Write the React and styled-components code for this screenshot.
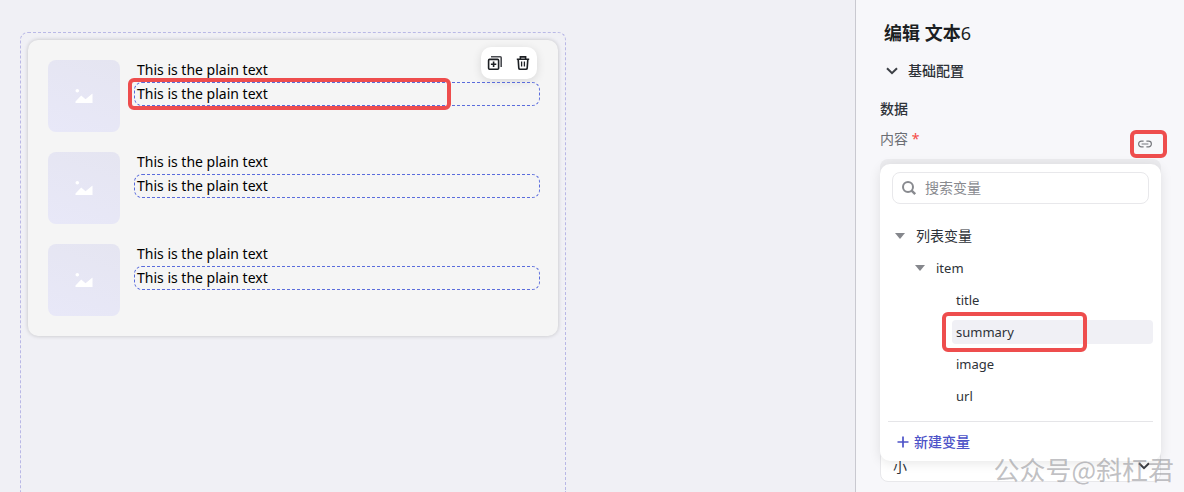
import React, { useState } from "react";
import styled, { createGlobalStyle, css } from "styled-components";

const ITEMS = [1, 2, 3];
const FIELDS = ["title", "summary", "image", "url"];

function Thumbnail() {
  return (
    <Thumb>
      <svg width="18" height="14" viewBox="0 0 18 14" fill="#fff">
        <circle cx="2.3" cy="1.8" r="1.8" />
        <path d="M0.5 14v-1.5L6.2 6.5l4.3 3.8L17.5 4.6V14z" />
      </svg>
    </Thumb>
  );
}

function CardToolbar() {
  return (
    <Toolbar>
      <IconButton type="button" aria-label="复制">
        <svg width="16" height="16" viewBox="0 0 16 16" fill="none" stroke="#1c1f23" strokeWidth="1.6">
          <rect x="1.6" y="4.4" width="10" height="9.8" rx="1" />
          <path d="M4 1.8h9.2q1 0 1 1v9.2" stroke="#4b4d52" />
          <path d="M6.6 6.6v5.4M3.9 9.3h5.4" />
        </svg>
      </IconButton>
      <IconButton type="button" aria-label="删除">
        <svg width="16" height="16" viewBox="0 0 16 16" fill="none" stroke="#1c1f23" strokeWidth="1.6">
          <path d="M1.8 4.2h12.4M5.4 3.9V1.9h5.2v2M3.2 4.4l.6 8.7q.1 1.2 1.3 1.2h5.8q1.2 0 1.3-1.2l.6-8.7" />
          <path d="M6.6 6.6v5M9.4 6.6v5" strokeWidth="1.3" />
        </svg>
      </IconButton>
    </Toolbar>
  );
}

function VariablePicker() {
  const [selected, setSelected] = useState("summary");
  const [keyword, setKeyword] = useState("");

  return (
    <Popover>
      <SearchBox>
        <svg width="16" height="16" viewBox="0 0 16 16" fill="none" stroke="#888a8f" strokeWidth="2">
          <circle cx="7" cy="7" r="5" />
          <path d="M10.6 10.6l3.6 3.6" strokeWidth="2.4" />
        </svg>
        <SearchInput
          aria-label="搜索变量"
          placeholder="搜索变量"
          value={keyword}
          onChange={(e) => setKeyword(e.target.value)}
        />
      </SearchBox>
      <Tree>
        <TreeRow $level={0}>
          <Caret />
          列表变量
        </TreeRow>
        <TreeRow $level={1}>
          <Caret />
          <VariableName>item</VariableName>
        </TreeRow>
        {FIELDS.map((name) => (
          <LeafRow key={name}>
            <Leaf type="button" $active={name === selected} onClick={() => setSelected(name)}>
              <VariableName>{name}</VariableName>
            </Leaf>
            {name === "summary" && <LeafMark />}
          </LeafRow>
        ))}
      </Tree>
      <PopoverFooter>
        <AddButton type="button">
          <svg width="12" height="12" viewBox="0 0 12 12" stroke="#4d53c8" strokeWidth="1.7">
            <path d="M6 0.5v11M0.5 6h11" />
          </svg>
          新建变量
        </AddButton>
      </PopoverFooter>
    </Popover>
  );
}

function App() {
  return (
    <>
      <GlobalStyle />
      <Page>
        <Canvas>
          <Frame>
            <Card>
              <CardToolbar />
              {ITEMS.map((id, index) => (
                <Item key={id}>
                  <Thumbnail />
                  <Texts>
                    <PlainText>This is the plain text</PlainText>
                    <PlainText $outlined>
                      This is the plain text
                      {index === 0 && <TextMark />}
                    </PlainText>
                  </Texts>
                </Item>
              ))}
            </Card>
          </Frame>
        </Canvas>
        <Sidebar>
          <Title>
            编辑 文本<span>6</span>
          </Title>
          <SectionToggle type="button">
            <Chevron />
            基础配置
          </SectionToggle>
          <GroupTitle>数据</GroupTitle>
          <LabelRow>
            <label htmlFor="content">
              内容 <Required>*</Required>
            </label>
            <LinkButton type="button" aria-label="绑定变量">
              <svg width="14" height="8" viewBox="0 0 14 8" fill="none" stroke="#77797e" strokeWidth="1.2">
                <path d="M5.6 1.2H3.4a2.8 2.8 0 0 0 0 5.6h2.2M8.4 1.2h2.2a2.8 2.8 0 0 1 0 5.6H8.4M3.6 4h6.8" />
              </svg>
            </LinkButton>
          </LabelRow>
          <ContentSlot>
            <ContentInput id="content" />
            <VariablePicker />
          </ContentSlot>
          <SelectWrap>
            <SizeSelect aria-label="尺寸" defaultValue="s">
              <option value="s">小</option>
              <option value="m">中</option>
              <option value="l">大</option>
            </SizeSelect>
            <Chevron />
          </SelectWrap>
        </Sidebar>
        <Watermark>公众号@斜杠君</Watermark>
      </Page>
    </>
  );
}

function Chevron() {
  return (
    <svg width="12" height="8" viewBox="0 0 12 8" fill="none" stroke="#3c3f45" strokeWidth="2">
      <path d="M1 1.2l5 5 5-5" />
    </svg>
  );
}

const GlobalStyle = createGlobalStyle`
  * {
    box-sizing: border-box;
  }
  body {
    margin: 0;
    color: #2e3238;
    font-family: "Noto Sans", "Noto Sans CJK SC", sans-serif;
    font-size: 14px;
    line-height: 20px;
  }
  button, input, select, textarea {
    font: inherit;
    color: inherit;
  }
  button {
    border: 0;
    padding: 0;
    background: none;
    cursor: pointer;
  }
`;

const Page = styled.div`
  position: relative;
  display: flex;
  height: 100vh;
  overflow: hidden;
`;

const Canvas = styled.main`
  flex: 1;
  min-width: 0;
  display: flex;
  padding: 32px 20px 0;
  background: #f0f0f5;
`;

const Frame = styled.div`
  flex: 1;
  max-width: 546px;
  padding: 7px;
  border: 1px dashed #b9b8e6;
  border-bottom: 0;
  border-radius: 8px 8px 0 0;
`;

const Card = styled.section`
  position: relative;
  display: grid;
  gap: 18px;
  padding: 18px 18px 20px 20px;
  border-radius: 10px;
  background: #f5f5f5;
  box-shadow: 0 0 4px rgba(0, 0, 0, 0.2);
`;

const Item = styled.article`
  display: flex;
  gap: 14px;
`;

const Thumb = styled.div`
  display: flex;
  align-items: center;
  justify-content: center;
  width: 72px;
  height: 72px;
  margin-top: 2px;
  border-radius: 8px;
  background: linear-gradient(200deg, #e5e5f1, #e8e8f8);
`;

const Texts = styled.div`
  flex: 1;
`;

const PlainText = styled.p`
  position: relative;
  height: 24px;
  margin: 0;
  padding: 0 2px;
  border: 1px dashed transparent;
  border-radius: 8px;
  color: #000;
  font-size: 14px;
  line-height: 22px;
  ${(props) =>
    props.$outlined &&
    css`
      border-color: #5a6cdc;
    `}
`;

const mark = css`
  position: absolute;
  border: 4px solid #ee4d4d;
  border-radius: 6px;
  pointer-events: none;
`;

const TextMark = styled.span`
  ${mark}
  inset: -5px 88px -5px -7px;
`;

const Toolbar = styled.div`
  position: absolute;
  top: 7px;
  right: 21px;
  display: flex;
  gap: 12px;
  padding: 8px 6px;
  border-radius: 10px;
  background: #fff;
  box-shadow: 0 2px 10px rgba(0, 0, 0, 0.12);
`;

const IconButton = styled.button`
  display: flex;
`;

const Sidebar = styled.aside`
  width: 329px;
  padding: 20px 23px 0 24px;
  border-left: 1px solid #c9c9d0;
  background: #f7f7fa;
`;

const Title = styled.h1`
  margin: 0 4px;
  color: #1c1f23;
  font-size: 18px;
  line-height: 26px;

  span {
    font-weight: 400;
  }
`;

const SectionToggle = styled.button`
  display: flex;
  align-items: center;
  gap: 10px;
  margin-top: 15px;
  padding-left: 6px;
  font-weight: 500;
`;

const GroupTitle = styled.h2`
  margin: 18px 0 0;
  font-size: 14px;
  font-weight: 500;
`;

const LabelRow = styled.div`
  display: flex;
  justify-content: space-between;
  height: 40px;
  padding-top: 10px;
  color: #6b6e74;
`;

const Required = styled.span`
  color: #f54a45;
`;

const LinkButton = styled.button`
  ${mark}
  position: static;
  display: flex;
  align-items: center;
  width: 37px;
  height: 28px;
  margin: 1px -6px 0 0;
  padding-left: 4px;
  pointer-events: auto;
`;

const ContentSlot = styled.div`
  position: relative;
  height: 290px;
`;

const ContentInput = styled.textarea`
  display: block;
  width: 100%;
  height: 96px;
  border: 0;
  border-radius: 8px;
  background: #ececef;
  resize: none;
`;

const Popover = styled.div`
  position: absolute;
  top: 5px;
  left: 0;
  right: 0;
  z-index: 1;
  padding: 8px 8px 9px;
  border-radius: 10px;
  background: #fff;
  box-shadow: 0 2px 12px rgba(0, 0, 0, 0.1);
`;

const SearchBox = styled.div`
  display: flex;
  align-items: center;
  gap: 8px;
  height: 32px;
  margin: 0 4px 16px;
  padding: 0 8px;
  border: 1px solid #e8e8eb;
  border-radius: 8px;
`;

const SearchInput = styled.input`
  flex: 1;
  min-width: 0;
  padding: 0;
  border: 0;
  outline: none;
  background: none;

  &::placeholder {
    color: #888a8f;
  }
`;

const Tree = styled.div`
  padding-bottom: 9px;
  border-bottom: 1px solid #e5e5e8;
`;

const TreeRow = styled.div`
  display: flex;
  align-items: center;
  gap: 11px;
  height: 32px;
  padding-left: ${(props) => 7 + props.$level * 20}px;
`;

const VariableName = styled.span`
  font-size: 13px;
`;

const Caret = styled.span`
  border: 5px solid transparent;
  border-top: 6px solid #85878c;
  border-bottom: 0;
`;

const LeafRow = styled.div`
  position: relative;
  padding: 4px 0 4px 64px;
`;

const Leaf = styled.button`
  display: block;
  width: 100%;
  height: 24px;
  padding: 0 4px;
  border-radius: 4px;
  text-align: left;
  background: ${(props) => (props.$active ? "#f0f0f5" : "transparent")};
`;

const LeafMark = styled.span`
  ${mark}
  inset: -4px 66px -4px 54px;
`;

const PopoverFooter = styled.div`
  padding: 10px 9px 0;
`;

const AddButton = styled.button`
  display: flex;
  align-items: center;
  gap: 5px;
  color: #4d53c8;
  font-weight: 500;
`;

const SelectWrap = styled.div`
  position: relative;
  display: flex;
  align-items: center;

  svg {
    position: absolute;
    right: 11px;
    pointer-events: none;
  }
`;

const SizeSelect = styled.select`
  appearance: none;
  width: 100%;
  height: 33px;
  padding: 2px 12px 0;
  border: 1px solid #e8e8eb;
  border-radius: 8px;
  background: #fff;
`;

const Watermark = styled.div`
  position: absolute;
  right: 10px;
  bottom: 5px;
  z-index: 2;
  color: rgba(140, 140, 145, 0.55);
  font-family: "Noto Sans CJK SC", sans-serif;
  font-size: 26px;
  line-height: 36px;
  pointer-events: none;
`;

export default App;
